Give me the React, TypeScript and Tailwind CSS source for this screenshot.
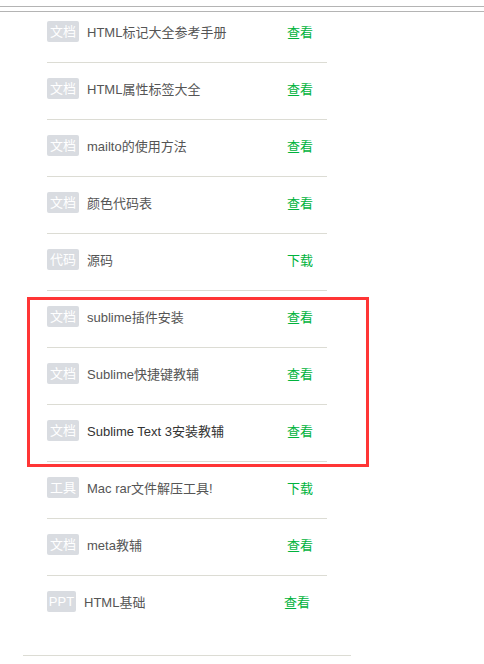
const items = [
  { tag: "文档", title: "HTML标记大全参考手册", action: "查看" },
  { tag: "文档", title: "HTML属性标签大全", action: "查看" },
  { tag: "文档", title: "mailto的使用方法", action: "查看" },
  { tag: "文档", title: "颜色代码表", action: "查看" },
  { tag: "代码", title: "源码", action: "下载" },
  { tag: "文档", title: "sublime插件安装", action: "查看" },
  { tag: "文档", title: "Sublime快捷键教辅", action: "查看" },
  { tag: "文档", title: "Sublime Text 3安装教辅", action: "查看", dark: true },
  { tag: "工具", title: "Mac rar文件解压工具!", action: "下载" },
  { tag: "文档", title: "meta教辅", action: "查看" },
  { tag: "PPT", title: "HTML基础", action: "查看", last: true },
];

export default function App() {
  return (
    <div
      className="relative h-[664px] w-[484px] overflow-hidden bg-white"
      style={{ fontFamily: '"Liberation Sans", "Noto Sans CJK SC", sans-serif' }}
    >
      <div className="h-[6px]" />
      <div className="border-t border-[#b4b4b4]" />
      <div className="h-[4px]" />
      <div className="border-t border-[#b4b4b4]" />

      <ul className="ml-[47px] w-[280px]">
        {items.map((item, i) => (
          <li
            key={i}
            className={
              (i === 0 ? "h-[51px] pt-[9px] " : "h-[57px] pt-[15px] ") +
              (item.last ? "" : "border-b border-[#dcdcd4] ") +
              "flex items-start"
            }
          >
            <div className="flex h-[21px] items-center">
              <span
                className={
                  "flex h-[21px] items-center justify-center rounded-[2px] bg-[#d9dce1] text-[13px] text-white " +
                  (item.tag === "PPT" ? "w-[29px]" : "w-[32px]")
                }
              >
                {item.tag}
              </span>
              <span
                className={
                  "ml-[8px] w-[200px] pt-[1px] text-[13px] leading-[21px] " +
                  (item.dark ? "text-[#333333]" : "text-[#555555]")
                }
              >
                {item.title}
              </span>
              <span className="pt-[2px] text-[13px] leading-[21px] text-[#00b33c]">{item.action}</span>
            </div>
          </li>
        ))}
      </ul>

      <div className="mt-[22px] ml-[23px] w-[328px] border-t border-[#dcdcd4]" />

      <div className="pointer-events-none absolute left-[27px] top-[297px] h-[170px] w-[342px] border-[3px] border-[#ff3535]" />
    </div>
  );
}
